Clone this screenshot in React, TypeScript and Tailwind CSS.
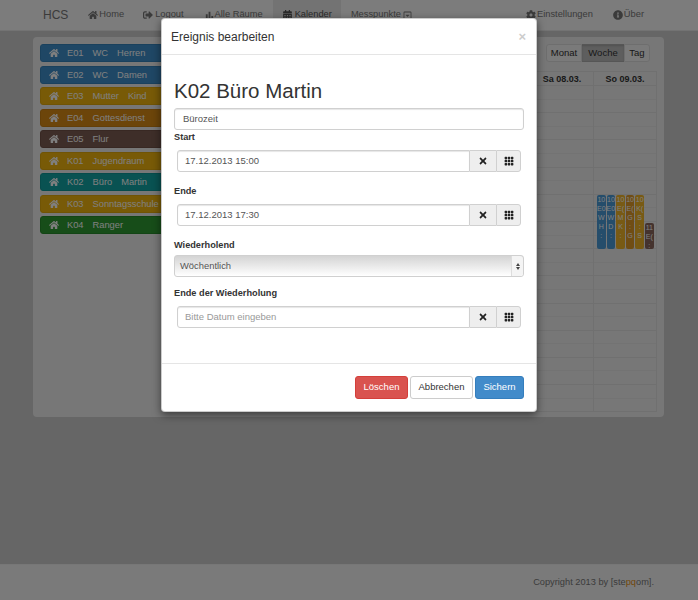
import { FaHome, FaSignOutAlt, FaCalendarAlt, FaCog, FaInfoCircle, FaTimes, FaRegCaretSquareDown } from 'react-icons/fa'
import { BsGrid3X3GapFill } from 'react-icons/bs'
import { MdBarChart } from 'react-icons/md'

const ROOMS = [
  { code: 'E01', name: ['WC', 'Herren'], color: 'bg-[#3f8fcb] border-[#3582bb]' },
  { code: 'E02', name: ['WC', 'Damen'], color: 'bg-[#3f8fcb] border-[#3582bb]' },
  { code: 'E03', name: ['Mutter', 'Kind'], color: 'bg-[#f0b40e] border-[#e0a80c]' },
  { code: 'E04', name: ['Gottesdienst'], color: 'bg-[#d98a14] border-[#c97f10]' },
  { code: 'E05', name: ['Flur'], color: 'bg-[#7d5c52] border-[#705047]' },
  { code: 'K01', name: ['Jugendraum'], color: 'bg-[#f0b40e] border-[#e0a80c]' },
  { code: 'K02', name: ['Büro', 'Martin'], color: 'bg-[#12a5a5] border-[#0f9696]' },
  { code: 'K03', name: ['Sonntagsschule'], color: 'bg-[#f0b40e] border-[#e0a80c]' },
  { code: 'K04', name: ['Ranger'], color: 'bg-[#2e9a32] border-[#278a2b]' },
]

// The first five days lie behind the dialog, so their headers stay empty
const DAYS = ['', '', '', '', '', 'Sa 08.03.', 'So 09.03.']

const EVENTS = [
  { lines: ['10', 'E0', 'W', 'H', ':'], color: 'bg-[#4a9ad6]', top: 'mt-0', height: 'h-[54px]' },
  { lines: ['10', 'E0', 'W', 'D', ':'], color: 'bg-[#4a9ad6]', top: 'mt-0', height: 'h-[54px]' },
  { lines: ['10', 'E(', 'M', 'K', ':'], color: 'bg-[#f0b428]', top: 'mt-0', height: 'h-[54px]' },
  { lines: ['10', 'E(', 'G', ':', 'G'], color: 'bg-[#e09a28]', top: 'mt-0', height: 'h-[54px]' },
  { lines: ['10', 'K(', 'S', ':', 'S'], color: 'bg-[#f0b428]', top: 'mt-0', height: 'h-[54px]' },
  { lines: ['11', 'E(', ':'], color: 'bg-[#8a665c]', top: 'mt-[28px]', height: 'h-[26px]' },
]

const NAV = [
  { label: 'Home', icon: <FaHome className="w-[10px] h-[10px] mr-[1px]" />, cls: 'mr-[19px]' },
  { label: 'Logout', icon: <FaSignOutAlt className="w-[10px] h-[10px] mr-[2px]" />, cls: 'mr-[20px]' },
  { label: 'Alle Räume', icon: <MdBarChart className="w-[11px] h-[11px]" />, cls: 'mr-[10px]' },
  { label: 'Kalender', icon: <FaCalendarAlt className="w-[9px] h-[10px] mr-[3px]" />, cls: 'bg-[#e7e7e7] text-[#555] pl-[10px] pr-[9px] mr-[10px]' },
]

function DateField({ value, placeholder }: { value?: string; placeholder?: string }) {
  return (
    <div className="mx-[3px] flex h-[22px] text-[9.5px]">
      <div className={`flex-1 flex items-center pl-[7px] border border-[#d0d0d0] rounded-l-[3px] shadow-[inset_0_1px_1px_rgba(0,0,0,0.1)] ${value ? 'text-[#555]' : 'text-[#999]'}`}>
        {value ?? placeholder}
      </div>
      <div className="w-[26px] flex items-center justify-center bg-[#eee] border-y border-[#d0d0d0]">
        <FaTimes className="w-[10px] h-[10px] text-[#222]" />
      </div>
      <div className="w-[25px] flex items-center justify-center bg-[#eee] border border-[#d0d0d0] rounded-r-[3px]">
        <BsGrid3X3GapFill className="w-[10px] h-[10px] text-[#222]" />
      </div>
    </div>
  )
}

function DayColumn({ label, children }: { label: string; children?: React.ReactNode }) {
  return (
    <div className="w-[63px] border-l border-[#e0e0e0] first:border-l-0">
      <div className="h-[14px] pt-[2px] flex items-center justify-center text-[9px] font-bold text-[#333] border-b border-[#e0e0e0]">{label}</div>
      <div className="relative">
        {Array.from({ length: 24 }, (_, i) => (
          <div key={i} className={`h-[13.6px] border-b ${i % 2 === 0 ? 'border-[#e6e6e6]' : 'border-[#e0e0e0]'}`} />
        ))}
        {children}
      </div>
    </div>
  )
}

export default function App() {
  return (
    <div className="relative w-[698px] h-[600px] overflow-hidden bg-[#ccc] flex flex-col font-['Liberation_Sans',Arial,sans-serif] text-[#333]">
      {/* Navbar */}
      <nav className="h-[31px] shrink-0 bg-[#f8f8f8] border-b border-[#e7e7e7] flex items-stretch pl-[43px] text-[9.3px] text-[#777]">
        <div className="flex items-center text-[12px] mr-[20px]">HCS</div>
        {NAV.map((n) => (
          <div key={n.label} className={`flex items-center ${n.cls}`}>
            {n.icon}
            <span>{n.label}</span>
          </div>
        ))}
        <div className="flex items-center gap-[2px]">
          <span>Messpunkte</span>
          <FaRegCaretSquareDown className="w-[9px] h-[9px]" />
        </div>
        <div className="ml-auto flex items-center gap-[1px] mr-[20px]">
          <FaCog className="w-[10px] h-[10px]" />
          <span>Einstellungen</span>
        </div>
        <div className="flex items-center gap-[1px] mr-[54px]">
          <FaInfoCircle className="w-[10px] h-[10px]" />
          <span>Über</span>
        </div>
      </nav>

      {/* Panel */}
      <main className="flex-1 px-[33px] pt-[6px]">
        <div className="h-[380px] w-[631px] bg-[#eee] rounded-[4px] flex pl-[7px] pr-[7px] pt-[7px]">
          <div className="w-[160px] shrink-0 flex flex-col gap-[3.5px]">
            {ROOMS.map((r) => (
              <div key={r.code} className={`h-[18px] rounded-[3px] border flex items-center text-[9.3px] text-white pl-[8px] ${r.color}`}>
                <FaHome className="w-[10px] h-[10px] mr-[8px] shrink-0" />
                <span className="mr-[9px] pt-[2px]">{r.code}</span>
                {r.name.map((w) => (
                  <span key={w} className="mr-[9px] pt-[2px] whitespace-nowrap">{w}</span>
                ))}
              </div>
            ))}
          </div>

          <div className="flex-1 flex flex-col items-end">
            <div className="flex h-[18px] text-[9.5px] text-[#333] mr-[7px] mb-[9px]">
              <div className="w-[36px] flex items-center justify-center bg-[#f4f4f4] border border-[#ddd] rounded-l-[3px]">Monat</div>
              <div className="w-[42px] flex items-center justify-center bg-[#bdbdbd] border-y border-[#adadad] shadow-[inset_0_1px_2px_rgba(0,0,0,0.15)]">Woche</div>
              <div className="w-[26px] flex items-center justify-center bg-[#f4f4f4] border border-[#ddd] rounded-r-[3px]">Tag</div>
            </div>
            <div className="flex border-t border-r border-[#e0e0e0]">
              {DAYS.map((d, idx) => (
                <DayColumn key={idx} label={d}>
                  {d.startsWith('So') && (
                    <div className="absolute left-[3px] top-[109px] flex gap-[1px]">
                      {EVENTS.map((e, i) => (
                        <div key={i} className={`w-[8.6px] overflow-hidden rounded-[2px] text-[7px] leading-[9px] text-white text-center ${e.color} ${e.top} ${e.height}`}>
                          {e.lines.map((l, j) => (
                            <div key={j} className="whitespace-nowrap">{l}</div>
                          ))}
                        </div>
                      ))}
                    </div>
                  )}
                </DayColumn>
              ))}
            </div>
          </div>
        </div>
      </main>

      {/* Footer */}
      <footer className="h-[36px] shrink-0 bg-[#f5f5f5] border-t border-[#eee] flex items-center justify-end pr-[44px] text-[9.25px] text-[#777]">
        <span>
          Copyright 2013 by [ste<span className="text-[#e38d13]">pq</span>om].
        </span>
      </footer>

      {/* Backdrop */}
      <div className="absolute inset-0 bg-black/50" />

      {/* Modal */}
      <div className="absolute left-[161px] top-[18px] w-[376px] h-[394px] bg-white rounded-[4px] border border-black/20 shadow-[0_3px_9px_rgba(0,0,0,0.5)] flex flex-col">
        <div className="h-[36px] shrink-0 flex items-center justify-between px-[9px] border-b border-[#e5e5e5]">
          <span className="text-[12px] text-[#333]">Ereignis bearbeiten</span>
          <span className="text-[13px] font-bold text-[#ccc] mr-[1px]">×</span>
        </div>
        <div className="flex-1 px-[12px] pt-[23px]">
          <h1 className="text-[20.5px] leading-[26px] text-[#333] mb-[4px]">K02 Büro Martin</h1>
          <div className="h-[22px] flex items-center pl-[8px] text-[9.5px] text-[#555] border border-[#d0d0d0] rounded-[3px] shadow-[inset_0_1px_1px_rgba(0,0,0,0.1)]">Bürozeit</div>
          <div className="h-[14px] pt-[2px] mb-[6px] flex items-center text-[9.2px] font-bold text-[#333]">Start</div>
          <DateField value="17.12.2013 15:00" />
          <div className="h-[14px] pt-[2px] mt-[12px] mb-[6px] flex items-center text-[9.2px] font-bold text-[#333]">Ende</div>
          <DateField value="17.12.2013 17:30" />
          <div className="h-[14px] pt-[2px] mt-[12px] mb-[3px] flex items-center text-[9.2px] font-bold text-[#333]">Wiederholend</div>
          <div className="h-[22px] flex text-[9.4px] text-[#555] border border-[#d0d0d0] rounded-[3px] bg-gradient-to-b from-[#d4d4d4] to-[#fff]">
            <div className="flex-1 flex items-center pl-[5px]">Wöchentlich</div>
            <div className="w-[12px] border-l border-[#ddd] flex flex-col items-center justify-center gap-[1px] bg-[#f4f4f4] rounded-r-[3px]">
              <span className="w-0 h-0 border-x-[2.5px] border-x-transparent border-b-[3px] border-b-[#444]" />
              <span className="w-0 h-0 border-x-[2.5px] border-x-transparent border-t-[3px] border-t-[#444]" />
            </div>
          </div>
          <div className="h-[14px] pt-[2px] mt-[9px] mb-[6px] flex items-center text-[9.2px] font-bold text-[#333]">Ende der Wiederholung</div>
          <DateField placeholder="Bitte Datum eingeben" />
        </div>
        <div className="h-[48px] shrink-0 border-t border-[#e5e5e5] flex items-start justify-end gap-[2px] pt-[12px] pr-[12px] text-[9.5px]">
          <button className="w-[53px] h-[23px] rounded-[3px] bg-[#d9534f] border border-[#d43f3a] text-white">Löschen</button>
          <button className="w-[63px] h-[23px] rounded-[3px] bg-white border border-[#ccc] text-[#333]">Abbrechen</button>
          <button className="w-[49px] h-[23px] rounded-[3px] bg-[#428bca] border border-[#357ebd] text-white">Sichern</button>
        </div>
      </div>
    </div>
  )
}
